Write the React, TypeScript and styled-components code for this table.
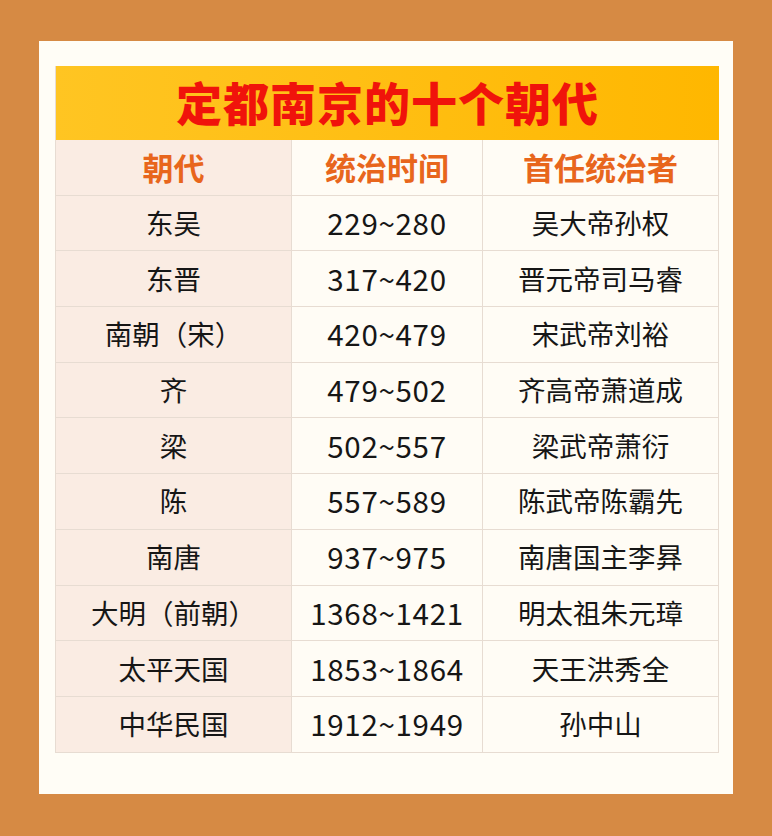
import React from "react";
import styled, { createGlobalStyle } from "styled-components";

const Global = createGlobalStyle`
  html, body { margin: 0; padding: 0; background: #d68a44; }
  body { font-family: "Noto Sans CJK SC", "Noto Sans", sans-serif; }
`;

const Page = styled.div`
  width: 772px;
  height: 836px;
  background: #d68a44;
  padding: 41px 39px 0 39px;
  box-sizing: border-box;
`;

const Card = styled.div`
  width: 694px;
  height: 753px;
  background: #fffdf6;
  padding: 25px 15px 0 16px;
  box-sizing: border-box;
`;

const Table = styled.div`
  display: grid;
  grid-template-columns: 236px 191px 236px;
  grid-template-rows: 74px;
  grid-auto-rows: 55.7px;
  border-left: 1px solid #e7dcd2;
`;

const Title = styled.div`
  grid-column: 1 / -1;
  display: flex;
  align-items: center;
  justify-content: center;
  background: linear-gradient(90deg, #ffc522 0%, #ffbf14 45%, #ffb700 100%);
  color: #f0130b;
  font-size: 46px;
  font-weight: 900;
  letter-spacing: 1px;
  padding-bottom: 4px;
  box-sizing: border-box;
`;

const Cell = styled.div<{ $first?: boolean; $head?: boolean; $num?: boolean }>`
  display: flex;
  align-items: center;
  justify-content: center;
  box-sizing: border-box;
  border-right: 1px solid #e7dcd2;
  border-bottom: 1px solid #e7dcd2;
  background: ${(p) => (p.$first ? "#faece3" : "#fffcf5")};
  color: ${(p) => (p.$head ? "#e8661c" : "#161616")};
  font-size: ${(p) => (p.$head ? "31px" : p.$num ? "29.5px" : "27.5px")};
  font-weight: ${(p) => (p.$head ? 700 : 400)};
  letter-spacing: ${(p) => (p.$num ? "0.7px" : "0")};
  padding-bottom: 2px;
`;

const rows: [string, string, string][] = [
  ["东吴", "229~280", "吴大帝孙权"],
  ["东晋", "317~420", "晋元帝司马睿"],
  ["南朝（宋）", "420~479", "宋武帝刘裕"],
  ["齐", "479~502", "齐高帝萧道成"],
  ["梁", "502~557", "梁武帝萧衍"],
  ["陈", "557~589", "陈武帝陈霸先"],
  ["南唐", "937~975", "南唐国主李昪"],
  ["大明（前朝）", "1368~1421", "明太祖朱元璋"],
  ["太平天国", "1853~1864", "天王洪秀全"],
  ["中华民国", "1912~1949", "孙中山"],
];

export default function App() {
  return (
    <>
      <Global />
      <Page>
        <Card>
          <Table>
            <Title>定都南京的十个朝代</Title>
            <Cell $first $head>朝代</Cell>
            <Cell $head>统治时间</Cell>
            <Cell $head>首任统治者</Cell>
            {rows.map(([a, b, c]) => (
              <React.Fragment key={a}>
                <Cell $first>{a}</Cell>
                <Cell $num>{b}</Cell>
                <Cell>{c}</Cell>
              </React.Fragment>
            ))}
          </Table>
        </Card>
      </Page>
    </>
  );
}
